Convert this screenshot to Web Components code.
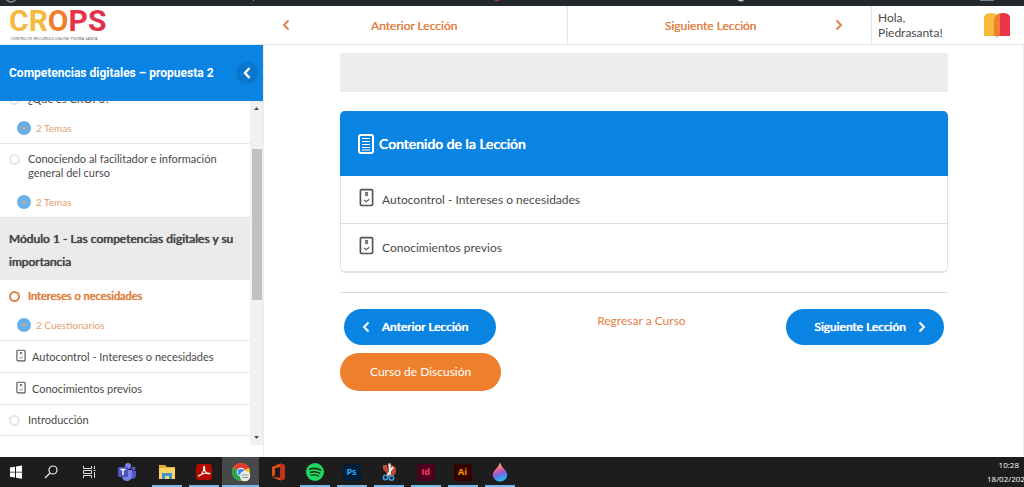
<!DOCTYPE html>
<html lang="es">
<head>
<meta charset="UTF-8">
<meta name="viewport" content="width=device-width, initial-scale=1">
<title>Intereses o necesidades - CROPS</title>
<style>
  :root {
    --blue: #0984e3;
    --orange: #ee7f2d;
    --orange-text: #df8246;
    --line: #e6e6e6;
    --text: #4a4a4a;
    /* thickens the regular weight without changing its widths */
    --strong: 0 0 currentColor, 0 0 1px currentColor;
  }
  body {
    margin: 0;
    font-family: Lato, "Liberation Sans", sans-serif;
    font-size: 11px;
    color: var(--text);
    background: #fff;
  }
</style>
</head>
<body>
<crops-app></crops-app>

<script>
const quizIcon = `
  <svg class="quiz" viewBox="0 0 16 20" fill="none" stroke="#555" aria-hidden="true">
    <rect x="1.5" y="1.5" width="13" height="17" rx="1.5" stroke-width="1.8"/>
    <path d="M6.6 4.2l2.8 4M9.4 4.2l-2.8 4" stroke-width="1.4"/>
    <path d="M5.4 12.6l2.2 1.9 3.4-2.6" stroke-width="1.2"/>
  </svg>`;

const chevron = (dir) => `
  <svg class="chevron" viewBox="0 0 8 12" width="8" height="12" fill="none" stroke="currentColor" stroke-width="2" aria-hidden="true">
    <path d="${dir === 'left' ? 'M6.5 1.5L2 6l4.5 4.5' : 'M1.5 1.5L6 6l-4.5 4.5'}"/>
  </svg>`;

class AdminBar extends HTMLElement {
  connectedCallback() {
    this.attachShadow({ mode: 'open' });
    this.shadowRoot.innerHTML = `
      <style>
        :host { display: block; height: 6px; background: #23282d; overflow: hidden; }
        div { display: flex; justify-content: space-between; padding: 0 30px 0 5px; }
        svg { display: block; }
      </style>
      <div>
        <svg width="12" height="6" viewBox="0 0 12 6"><circle cx="6" cy="-3" r="5" fill="none" stroke="#8b9095" stroke-width="1.5"/></svg>
        <svg width="4" height="6" viewBox="0 0 4 6"><path d="M1 0l1 1" stroke="#8b9095"/></svg>
        <svg width="10" height="6" viewBox="0 0 10 6"><circle cx="5" cy="-3" r="4" fill="#a8452f"/></svg>
        <svg width="8" height="6" viewBox="0 0 8 6"><circle cx="4" cy="-2" r="3.5" fill="#c5c8cc"/></svg>
        <svg width="14" height="6" viewBox="0 0 14 6"><rect width="14" height="1" fill="#6f8796"/></svg>
      </div>
    `;
  }
}
customElements.define('admin-bar', AdminBar);

class CropsLogo extends HTMLElement {
  connectedCallback() {
    this.attachShadow({ mode: 'open' });
    this.shadowRoot.innerHTML = `
      <style>
        :host { display: block; padding-left: 9px; }
        a { display: block; text-decoration: none; }
        .word { display: block; font: 700 30px/30px Roboto, sans-serif; }
        .c, .r { color: #f5b93f; }
        .o { color: #ee7f2d; }
        .p { color: #e5344a; }
        .s { color: #e0324b; }
        .tag { display: block; font: 4px/5px "Open Sans", sans-serif; color: #555; padding-left: 2px; white-space: nowrap; }
      </style>
      <a href="#">
        <span class="word"><span class="c">C</span><span class="r">R</span><span class="o">O</span><span class="p">P</span><span class="s">S</span></span>
        <span class="tag">CENTRO DE RECURSOS ONLINE PIEDRA SANTA</span>
      </a>
    `;
  }
}
customElements.define('crops-logo', CropsLogo);

class SiteHeader extends HTMLElement {
  connectedCallback() {
    this.attachShadow({ mode: 'open' });
    this.shadowRoot.innerHTML = `
      <style>
        :host { display: block; border-bottom: 1px solid var(--line); }
        header { display: flex; height: 38px; }
        crops-logo { flex: 0 0 254px; }
        nav { flex: 1; display: grid; grid-template-columns: 1fr 1fr; }
        nav a {
          display: flex;
          align-items: center;
          padding: 0 28px 0 19px;
          border-right: 1px solid var(--line);
          color: var(--orange-text);
          font-size: 12px;
          text-shadow: 0 0 currentColor;
          text-decoration: none;
        }
        nav span { flex: 1; text-align: center; }
        .user {
          flex: 0 0 152px;
          box-sizing: border-box;
          display: flex;
          align-items: center;
          justify-content: space-between;
          padding: 0 14px 0 6px;
          font-size: 12px;
          line-height: 15px;
        }
      </style>
      <header>
        <crops-logo></crops-logo>
        <nav>
          <a class="prev" href="#">${chevron('left')}<span>Anterior Lección</span></a>
          <a class="next" href="#"><span>Siguiente Lección</span>${chevron('right')}</a>
        </nav>
        <div class="user">
          <div>Hola,<br>Piedrasanta!</div>
          <svg width="26" height="26" viewBox="0 0 26 26" role="img" aria-label="Piedrasanta">
            <path d="M0 5Q1 1 7 1q4 0 6 2v20l-3 1H0z" fill="#f9b93c"/>
            <path d="M26 5Q25 1 19 1q-4 0-6 2v20l2 1h11z" fill="#ea3546"/>
            <path d="M10 7q1-4 6-6v22l-2 1-1 2-1-2h-2z" fill="#f0822d"/>
          </svg>
        </div>
      </header>
    `;
  }
}
customElements.define('site-header', SiteHeader);

class LessonItem extends HTMLElement {
  connectedCallback() {
    const count = this.getAttribute('count');
    const open = this.hasAttribute('open');
    this.attachShadow({ mode: 'open' });
    this.shadowRoot.innerHTML = `
      <style>
        :host { display: block; padding: 8px 9px; border-bottom: 1px solid var(--line); }
        .title { display: flex; gap: 8px; color: var(--text); line-height: 14px; text-decoration: none; }
        .dot {
          flex: none;
          box-sizing: border-box;
          width: 11px;
          height: 11px;
          margin-top: 2px;
          border: 2px solid #e4e6e8;
          border-radius: 50%;
        }
        :host([current]) .title { color: var(--orange-text); text-shadow: var(--strong); }
        :host([current]) .dot { border-color: var(--orange-text); }
        button {
          display: flex;
          align-items: center;
          gap: 5px;
          margin: 15px 0 0 8px;
          padding: 0;
          border: 0;
          background: none;
          font: 10px/14px Lato, sans-serif;
          color: #e6a06c;
        }
      </style>
      <a class="title" href="#"><span class="dot"></span><slot></slot></a>
      ${count ? `
      <button type="button" aria-expanded="${open}">
        <svg width="14" height="14" viewBox="0 0 14 14" fill="none" aria-hidden="true">
          <circle cx="7" cy="7" r="7" fill="#68b0ea"/>
          <path d="${open ? 'M4.5 8L7 5.7 9.5 8' : 'M4.5 6L7 8.3 9.5 6'}" stroke="#cfa98e" stroke-width="1.5"/>
        </svg>
        ${count}
      </button>` : ''}
    `;
  }
}
customElements.define('lesson-item', LessonItem);

class SidebarQuiz extends HTMLElement {
  connectedCallback() {
    this.attachShadow({ mode: 'open' });
    this.shadowRoot.innerHTML = `
      <style>
        :host { display: block; border-bottom: 1px solid var(--line); }
        a { display: flex; align-items: center; gap: 6px; padding: 8px 16px 7px; line-height: 16px; color: var(--text); text-decoration: none; }
        .quiz { width: 10px; height: 13px; margin-bottom: 3px; }
      </style>
      <a href="#">${quizIcon}<slot></slot></a>
    `;
  }
}
customElements.define('sidebar-quiz', SidebarQuiz);

class CourseSidebar extends HTMLElement {
  connectedCallback() {
    this.attachShadow({ mode: 'open' });
    this.shadowRoot.innerHTML = `
      <style>
        :host { display: flex; flex-direction: column; min-height: 0; border-right: 1px solid #ececec; }
        .course {
          flex: none;
          display: flex;
          align-items: center;
          justify-content: space-between;
          height: 56px;
          padding: 0 5px 0 9px;
          background: var(--blue);
          color: #fff;
        }
        h1 { margin: 0; font: 700 12px/16px Roboto, sans-serif; }
        .course button {
          display: grid;
          place-items: center;
          width: 22px;
          height: 22px;
          padding: 0;
          border: 0;
          border-radius: 50%;
          background: #0a77cd;
          color: #fff;
        }
        .wrap { flex: 1; display: flex; min-height: 0; margin-bottom: 12px; }
        .list { flex: 1; overflow: hidden; }
        h2 {
          margin: 0;
          padding: 9px 9px 7px;
          background: #ebebeb;
          font-size: 12px;
          line-height: 23px;
          font-weight: 400;
          text-shadow: var(--strong);
        }
        lesson-item[current] { padding-top: 9px; }
        .end { height: 40px; }
        .scroll { flex: none; display: flex; flex-direction: column; align-items: center; width: 13px; background: #f1f1f1; }
        .scroll svg { flex: none; margin: 4px 0; }
        .track { flex: 1; width: 10px; }
        .thumb { height: 48%; margin-top: 33px; background: #c1c1c1; }
      </style>
      <div class="course">
        <h1>Competencias digitales – propuesta 2</h1>
        <button type="button" aria-label="Ocultar menú">
          <svg width="8" height="12" viewBox="0 0 8 12" fill="none" stroke="currentColor" stroke-width="2.5"><path d="M6.500 1L2 6l4.500 5"/></svg>
        </button>
      </div>
      <div class="wrap">
        <div class="list">
          <lesson-item count="2 Temas">¿Qué es CROPS?</lesson-item>
          <lesson-item count="2 Temas">Conociendo al facilitador e información general del curso</lesson-item>
          <h2>Módulo 1 - Las competencias digitales y su importancia</h2>
          <lesson-item count="2 Cuestionarios" current open>Intereses o necesidades</lesson-item>
          <sidebar-quiz>Autocontrol - Intereses o necesidades</sidebar-quiz>
          <sidebar-quiz>Conocimientos previos</sidebar-quiz>
          <lesson-item>Introducción</lesson-item>
          <div class="end"></div>
        </div>
        <div class="scroll" aria-hidden="true">
          <svg width="7" height="7" viewBox="0 0 7 7"><path d="M1 5l2.500-3L6 5z" fill="#505050"/></svg>
          <div class="track"><div class="thumb"></div></div>
          <svg width="7" height="7" viewBox="0 0 7 7"><path d="M1 2l2.500 3L6 2z" fill="#505050"/></svg>
        </div>
      </div>
    `;
    // start the list a little way down, past the first title
    this.shadowRoot.querySelector('.list').scrollTop = 17;
  }
}
customElements.define('course-sidebar', CourseSidebar);

class LessonContent extends HTMLElement {
  connectedCallback() {
    this.attachShadow({ mode: 'open' });
    this.shadowRoot.innerHTML = `
      <style>
        :host { display: block; }
        .head {
          display: flex;
          align-items: center;
          gap: 5px;
          height: 65px;
          padding: 0 18px;
          border-radius: 5px 5px 0 0;
          background: var(--blue);
          color: #fff;
        }
        h2 { margin: 0; font-size: 14px; line-height: 20px; font-weight: 400; text-shadow: var(--strong); }
        ul { margin: 0; padding: 0; list-style: none; border: 1px solid #dfe3e6; border-width: 0 1px 2px; border-radius: 0 0 5px 5px; }
        li + li { border-top: 1px solid #dcdfe1; }
        a { display: flex; align-items: center; gap: 8px; padding: 11px 18px 12px; line-height: 22px; font-size: 12px; color: var(--text); text-decoration: none; }
        .quiz { width: 15px; height: 19px; margin-bottom: 4px; }
        a span { padding-top: 2px; }
      </style>
      <div class="head">
        <svg width="16" height="20" viewBox="0 0 16 20" fill="none" stroke="#fff" aria-hidden="true">
          <rect x="1" y="1" width="14" height="18" rx="2" stroke-width="2"/>
          <path d="M4 4.5h8M4 7.5h8M4 10.500h8M4 13.500h8M4 16h8" stroke-width="1"/>
        </svg>
        <h2>Contenido de la Lección</h2>
      </div>
      <ul>
        <li><a href="#">${quizIcon}<span>Autocontrol - Intereses o necesidades</span></a></li>
        <li><a href="#">${quizIcon}<span>Conocimientos previos</span></a></li>
      </ul>
    `;
  }
}
customElements.define('lesson-content', LessonContent);

class LessonActions extends HTMLElement {
  connectedCallback() {
    this.attachShadow({ mode: 'open' });
    this.shadowRoot.innerHTML = `
      <style>
        :host { display: block; border-top: 1px solid #d9d9d9; padding-top: 16px; }
        .row { display: flex; justify-content: space-between; padding: 0 4px; }
        button { border: 0; border-radius: 20px; font: 12px/16px Lato, sans-serif; color: #fff; }
        .nav {
          display: flex;
          align-items: center;
          gap: 12px;
          height: 36px;
          padding: 0 28px 0 18px;
          background: var(--blue);
          text-shadow: var(--strong);
        }
        .nav.next { padding: 0 18px 0 28px; }
        .row a { font-size: 12px; line-height: 16px; margin-top: 4px; color: var(--orange-text); text-decoration: none; }
        .forum { margin-top: 8px; height: 38px; padding: 0 30px; background: var(--orange); }
      </style>
      <div class="row">
        <button class="nav" type="button">${chevron('left')}Anterior Lección</button>
        <a href="#">Regresar a Curso</a>
        <button class="nav next" type="button">Siguiente Lección${chevron('right')}</button>
      </div>
      <button class="forum" type="button">Curso de Discusión</button>
    `;
  }
}
customElements.define('lesson-actions', LessonActions);

class TaskBar extends HTMLElement {
  connectedCallback() {
    this.attachShadow({ mode: 'open' });
    this.shadowRoot.innerHTML = `
      <style>
        :host { display: flex; height: 30px; background: #1d1d1d; color: #fff; overflow: hidden; }
        button { display: grid; place-items: center; width: 37px; height: 30px; padding: 0; border: 0; background: none; }
        .pinned, .apps { display: flex; }
        .pinned { width: 148px; }
        .pinned button { width: 38px; }
        .pinned .start { width: 32px; }
        .run { background: linear-gradient(#76b9ed, #76b9ed) center bottom / 30px 2px no-repeat; }
        .active { background: linear-gradient(#76b9ed, #76b9ed) center bottom / 37px 2px no-repeat, #474849; }
        svg { display: block; width: 20px; height: 20px; }
        .tile { display: grid; place-items: center; width: 18px; height: 17px; border-radius: 3px; font: 700 9px/16px "Open Sans", sans-serif; }
        .ps { background: #001e36; color: #31a8ff; }
        .id { background: #49021f; color: #ff3366; }
        .ai { background: #330000; color: #ff9a00; }
        .clock { margin-left: auto; width: 37px; font: 8px/14px "Open Sans", sans-serif; white-space: nowrap; padding-top: 1px; }
        .time { text-align: right; padding-right: 5px; }
      </style>
      <div class="pinned">
        <button class="start" type="button" aria-label="Inicio"><svg viewBox="0 0 20 20" fill="#fff"><path d="M4 5.500l5-.8v5H4zM10 4.500l6-1v6.200h-6zM4 10.500h5v5l-5-.8zM10 10.500h6v6.200l-6-1z"/></svg></button>
        <button type="button" aria-label="Buscar"><svg viewBox="0 0 20 20" fill="none" stroke="#eee" stroke-width="1.2"><circle cx="12" cy="8" r="4"/><path d="M9 11l-5 5"/></svg></button>
        <button type="button" aria-label="Vista de tareas"><svg viewBox="0 0 20 20" fill="none" stroke="#ddd"><path d="M4.500 4v2.500h8V4M4.500 16v-2.500h8V16M4.500 8.500h8v3h-8zM15.500 4v3M15.500 10v6M14.500 8.500h2"/></svg></button>
        <button type="button" aria-label="Teams"><svg viewBox="0 0 20 20"><circle cx="16.500" cy="6.500" r="2" fill="#5059c9"/><path d="M13 9h6v5q-1 3-4 3h-2z" fill="#5059c9"/><circle cx="11" cy="4" r="3" fill="#7b83eb"/><path d="M7 8h8v6q-1 5-5 5t-5-4z" fill="#7b83eb"/><rect x="1" y="5" width="10" height="10" rx="1" fill="#4b53bc"/><path d="M3.500 7.500h5M6 7.500v5.500" stroke="#fff" stroke-width="1.4"/></svg></button>
      </div>
      <div class="apps">
        <button class="run" type="button" aria-label="Explorador"><svg viewBox="0 0 20 20"><path d="M2 3h6l2 2h8v12H2z" fill="#e8a93a"/><path d="M2 6h16v11H2z" fill="#fcd462"/><path d="M5 17v-6h10v6h-3v-3H8v3z" fill="#3a94d0"/></svg></button>
        <button class="run" type="button" aria-label="Acrobat"><svg viewBox="0 0 20 20"><rect x="2" y="2" width="16" height="16" rx="3" fill="#b30b00"/><path d="M5 14c3-1 5-5 4.700-8.500-.2-1.500 1-1.500.8 0-.4 3 1.500 6.500 4.800 6.500 1 0 .7-1-.5-1-3-.2-6 .5-9.300 2.200-1 .6-1.200 1.200-.5.800z" fill="none" stroke="#fff" stroke-width="1.1"/></svg></button>
        <button class="active" type="button" aria-label="Chrome"><svg viewBox="0 0 20 20"><circle cx="10" cy="10" r="9" fill="#fbc116"/><path d="M10 10L2.200 5.500A9 9 0 0 1 17.800 5.500z" fill="#e33b2e"/><path d="M10 10L2.200 5.500A9 9 0 0 0 10 19z" fill="#2ba24c"/><path d="M10 6h8L17 4H10z" fill="#e33b2e"/><circle cx="10" cy="10" r="4.2" fill="#fff"/><circle cx="10" cy="10" r="3.3" fill="#4285f4"/><circle cx="14" cy="14" r="5.2" fill="#e9e9ea"/><path d="M10.500 13h7M11 15.500h6" stroke="#8f9aa3"/></svg></button>
        <button type="button" aria-label="Office"><svg viewBox="0 0 20 20"><path d="M4 5l8-3.500 5 1.500v14l-5 1.500L4 15l8 .8V5L7 6.300v7L4 14.800z" fill="#e64a19"/><path d="M12 1.500l5 1.500v14l-5 1.500z" fill="#c5331b"/></svg></button>
        <button class="run" type="button" aria-label="Spotify"><svg viewBox="0 0 20 20" fill="none" stroke="#1b2b20" stroke-linecap="round"><circle cx="10" cy="10" r="9" fill="#1ed760" stroke="none"/><path d="M5 7q5.500-1.500 10.500 1" stroke-width="1.8"/><path d="M5.500 10.200q5-1.200 9 1" stroke-width="1.5"/><path d="M6 13.200q4-1 7.500.8" stroke-width="1.2"/></svg></button>
        <button class="run" type="button" aria-label="Photoshop"><span class="tile ps">Ps</span></button>
        <button class="run" type="button" aria-label="Recortes"><svg viewBox="0 0 20 20" fill="none"><path d="M4 3h8q6 1 5 7-1 4-6 5L4 7z" fill="#c7472a"/><path d="M8 4q4-1 5 3t-3 5z" fill="#1d1d1d"/><path d="M10.500 1.500l.5 11M14 5l-6 9" stroke="#f2f2f2" stroke-width="2.2"/><circle cx="6.500" cy="15.500" r="2.2" stroke="#3f9be0" stroke-width="1.6"/><circle cx="12.500" cy="16" r="2.2" stroke="#3f9be0" stroke-width="1.6"/></svg></button>
        <button class="run" type="button" aria-label="InDesign"><span class="tile id">Id</span></button>
        <button class="run" type="button" aria-label="Illustrator"><span class="tile ai">Ai</span></button>
        <button class="run" type="button" aria-label="Paint 3D"><svg viewBox="0 0 20 20"><defs><linearGradient id="drop" x1="0" y1="0" x2="0.3" y2="1"><stop offset="0.1" stop-color="#fcd34a"/><stop offset="0.45" stop-color="#ec5f9b"/><stop offset="0.7" stop-color="#7a62e0"/><stop offset="1" stop-color="#27b4ee"/></linearGradient></defs><path d="M10 0.500q1 3.500 4.500 7t2.500 7q-2 5-7 5t-7-5q-1-3.500 2.500-7T10 .5z" fill="url(#drop)"/></svg></button>
      </div>
      <div class="clock"><div class="time">10:28</div><div>18/02/202</div></div>
    `;
  }
}
customElements.define('task-bar', TaskBar);

class CropsApp extends HTMLElement {
  connectedCallback() {
    this.attachShadow({ mode: 'open' });
    this.shadowRoot.innerHTML = `
      <style>
        :host { display: flex; flex-direction: column; height: 100vh; }
        admin-bar, site-header, task-bar { flex: none; }
        .page { flex: 1; display: flex; min-height: 0; }
        course-sidebar { flex: 0 0 263px; }
        main {
          flex: 1;
          display: flex;
          flex-direction: column;
          gap: 19px;
          min-width: 0;
          padding: 8px 75px 0 76px;
          border-right: 1px solid #ececec;
        }
        .banner { height: 39px; background: #ececec; }
      </style>
      <admin-bar></admin-bar>
      <site-header></site-header>
      <div class="page">
        <course-sidebar></course-sidebar>
        <main>
          <div class="banner"></div>
          <lesson-content></lesson-content>
          <lesson-actions></lesson-actions>
        </main>
      </div>
      <task-bar></task-bar>
    `;
  }
}
customElements.define('crops-app', CropsApp);
</script>
</body>
</html>
